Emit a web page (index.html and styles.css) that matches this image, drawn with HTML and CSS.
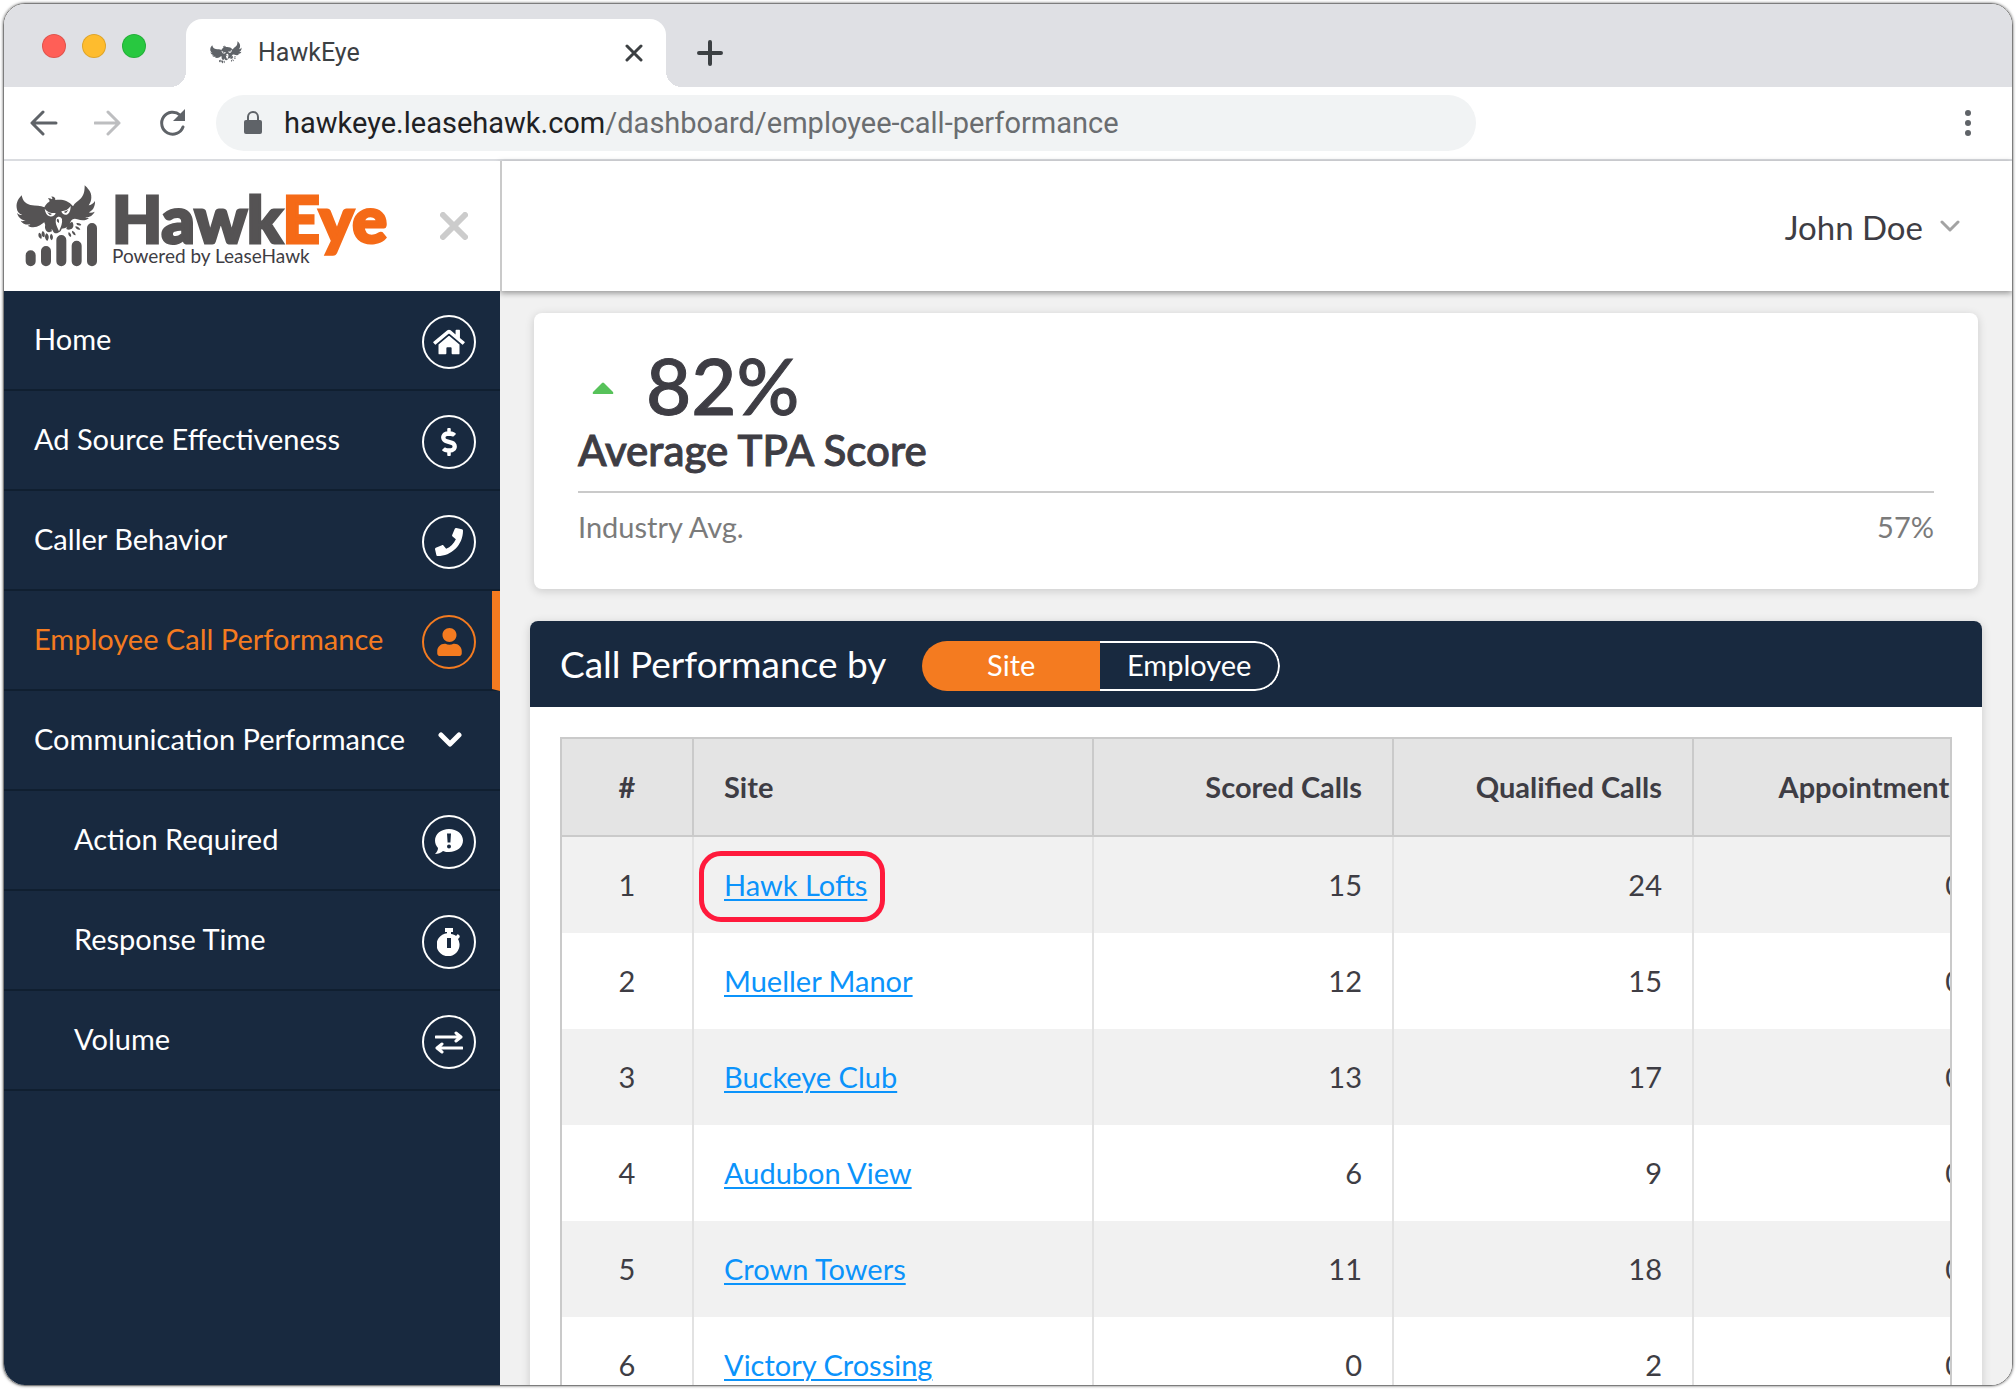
FILE: index.html
```html
<!DOCTYPE html>
<html lang="en">
<head>
<meta charset="utf-8">
<meta name="viewport" content="width=device-width, initial-scale=1">
<title>HawkEye</title>
<link rel="stylesheet" href="styles.css">
</head>
<body>
<svg class="defs" aria-hidden="true">
  <symbol id="hawk" viewBox="0 0 240 180">
    <path d="M17 31C8 40 0 52 2 68C3 80 10 86 19 90C11 90 6 87 3 83C6 96 15 105 29 106C23 109 18 109 14 107C20 116 31 121 43 118C41 121 38 122 35 122C48 130 61 127 72 121C78 117 82 113 85 112C88 125 97 132 109 134C112 143 119 148 126 143C132 141 136 136 137 131C148 131 160 124 163 112C168 101 176 100 184 103C198 108 211 107 219 99C215 99 211 99 208 97C220 98 231 91 236 80C230 83 223 84 218 82C229 78 238 66 237 48C232 56 225 60 218 61C228 48 229 28 219 15C215 10 210 4 206 1C206 16 205 29 195 40C185 50 176 54 171 64C158 46 137 42 118 45C119 39 113 34 106 35C109 38 110 40 108 43C103 40 98 39 96 41C101 44 101 47 100 50C93 54 88 60 85 67C74 62 60 62 43 60C27 56 20 46 17 31Z"/>
    <path class="cut" d="M86 71C94 82 107 85 119 84C117 92 109 96 101 94C93 92 88 84 86 71ZM164 63C157 74 147 78 136 79C138 87 145 91 152 89C160 86 164 76 164 63ZM120 101C125 92 136 94 138 103C140 114 135 126 129 139C126 128 116 117 120 101Z"/>
    <path d="M93 82l15 5-6 4zM157 75l-14 6 7 3zM123 103c5-4 7 3 6 11-5-2-8-6-6-11z"/>
    <path d="M89 118C98 120 106 127 108 139C99 144 90 141 88 132C86 127 87 122 89 118ZM80 138c7 3 8 12 5 19-8-1-11-12-5-19zM69 143c8 2 10 12 7 18-8-2-11-11-7-18zM91 145c8 3 10 15 3 23-8-5-9-16-3-23zM105 146c7 4 8 14 2 20-6-5-7-14-2-20zM168 110C158 115 152 122 151 132C160 137 171 132 172 124C173 118 171 113 168 110ZM181 115c6-2 12 0 15 5-6 4-14 1-15-5zM178 124c7 0 13 4 15 10-7 2-15-3-15-10zM168 137c7 2 11 8 11 14-7-1-12-7-11-14zM158 141c6 3 9 9 7 15-7-2-10-8-7-15z"/>
  </symbol>
</svg>

<div class="window">
  <div class="tabstrip">
    <div class="lights"><span class="light red"></span><span class="light amber"></span><span class="light green"></span></div>
    <div class="tab">
      <svg class="favicon" aria-hidden="true"><use href="#hawk"/></svg>
      <span class="tab-title">HawkEye</span>
      <button class="icon-btn" aria-label="Close tab"><svg width="18" height="18" viewBox="0 0 18 18"><path class="stroke w3" d="M2 2l14 14M16 2L2 16"/></svg></button>
    </div>
    <button class="icon-btn new-tab" aria-label="New tab"><svg width="26" height="26" viewBox="0 0 26 26"><path class="stroke w4" d="M13 2v22M2 13h22"/></svg></button>
  </div>

  <div class="toolbar">
    <button class="icon-btn" aria-label="Back"><svg width="28" height="28" viewBox="0 0 28 28"><path class="stroke w3" d="M26 14H3M13 3L2 14l11 11"/></svg></button>
    <button class="icon-btn faded" aria-label="Forward"><svg width="28" height="28" viewBox="0 0 28 28"><path class="stroke w3" d="M1 14h24M14 3l11 11-11 11"/></svg></button>
    <button class="icon-btn" aria-label="Reload"><svg width="28" height="28" viewBox="0 0 28 28"><path class="stroke w3" d="M22 6A11 11 0 1 0 25 18"/><path d="M27 0v12H15z"/></svg></button>
    <div class="address">
      <svg width="18" height="24" viewBox="0 0 18 24" aria-hidden="true"><path d="M2 9h14a2 2 0 0 1 2 2v10a2 2 0 0 1-2 2H2a2 2 0 0 1-2-2V11a2 2 0 0 1 2-2z"/><path class="stroke w2" d="M4 10V6a5 5 0 0 1 10 0v4"/></svg>
      <span class="url"><b>hawkeye.leasehawk.com</b>/dashboard/employee-call-performance</span>
    </div>
    <button class="icon-btn menu" aria-label="Menu"><svg width="8" height="28" viewBox="0 0 8 28"><circle cx="4" cy="4" r="3"/><circle cx="4" cy="14" r="3"/><circle cx="4" cy="24" r="3"/></svg></button>
  </div>

  <div class="app">
    <aside class="sidebar">
      <div class="brand">
        <svg class="logo" viewBox="0 0 246 246" aria-hidden="true">
          <use href="#hawk" width="240" height="180"/>
          <path class="bars" d="M44 211v18M90 198v31M136 165v64M182 182v47M228 129v100"/>
        </svg>
        <div class="wordmark">
          <div class="name">Hawk<span>Eye</span></div>
          <div class="tagline">Powered by LeaseHawk</div>
        </div>
        <button class="icon-btn collapse" aria-label="Close menu"><svg width="28" height="28" viewBox="0 0 28 28"><path class="stroke w6" d="M3 3l22 22M25 3L3 25"/></svg></button>
      </div>
      <nav>
        <a class="item" href="#home">Home <span class="badge"><svg width="32" height="28" viewBox="0 0 576 512"><path d="M280.370 148.260L96 300.110V464a16 16 0 0 0 16 16l112.060-.290a16 16 0 0 0 15.920-16V368a16 16 0 0 1 16-16h64a16 16 0 0 1 16 16v95.640a16 16 0 0 0 16 16.050L464 480a16 16 0 0 0 16-16V300L295.670 148.260a12.190 12.190 0 0 0-15.300 0zM571.600 251.470L488 182.560V44.050a12 12 0 0 0-12-12h-56a12 12 0 0 0-12 12v72.610L318.470 43a48 48 0 0 0-61 0L4.340 251.470a12 12 0 0 0-1.600 16.900l25.500 31A12 12 0 0 0 45.150 301l235.220-193.740a12.190 12.190 0 0 1 15.300 0L530.900 301a12 12 0 0 0 16.900-1.600l25.500-31a12 12 0 0 0-1.700-16.930z"/></svg></span></a>
        <a class="item" href="#ads">Ad Source Effectiveness <span class="badge"><svg width="16" height="28" viewBox="0 0 288 512"><path d="M209.200 233.400l-108-31.600C88.700 198.200 80 186.500 80 173.500c0-16.300 13.200-29.500 29.500-29.500h66.300c12.200 0 24.200 3.700 34.200 10.500 6.100 4.100 14.300 3.100 19.500-2l34.800-34c7.100-6.900 6.100-18.400-1.800-24.500C238 74.800 207.400 64.100 176 64V16c0-8.800-7.200-16-16-16h-32c-8.800 0-16 7.200-16 16v48h-2.500C45.800 64-5.400 118.700.5 183.600c4.200 46.100 39.400 83.600 83.800 96.600l102.500 30c12.500 3.700 21.200 15.300 21.200 28.300 0 16.300-13.200 29.500-29.500 29.500h-66.300C100 368 88 364.300 78 357.500c-6.100-4.100-14.300-3.100-19.500 2l-34.800 34c-7.100 6.900-6.100 18.400 1.800 24.500 24.500 19.200 55.100 29.900 86.500 30v48c0 8.800 7.200 16 16 16h32c8.800 0 16-7.200 16-16v-48.200c46.600-.9 90.300-28.600 105.700-72.700 21.500-61.600-14.600-124.800-72.500-141.700z"/></svg></span></a>
        <a class="item" href="#callers">Caller Behavior <span class="badge"><svg width="28" height="28" viewBox="0 0 512 512"><path d="M493.400 24.600l-104-24c-11.300-2.600-22.900 3.300-27.500 13.900l-48 112c-4.200 9.800-1.400 21.300 6.900 28l60.600 49.600c-36 76.700-98.900 140.500-177.200 177.200l-49.600-60.600c-6.800-8.300-18.200-11.100-28-6.900l-112 48C3.900 366.500-2 378.100.6 389.400l24 104C27.100 504.200 36.700 512 48 512c256.100 0 464-207.500 464-464 0-11.200-7.700-20.900-18.600-23.400z"/></svg></span></a>
        <a class="item active" href="#employees" aria-current="page">Employee Call Performance <span class="badge"><svg width="25" height="28" viewBox="0 0 448 512"><path d="M224 256c70.700 0 128-57.300 128-128S294.700 0 224 0 96 57.300 96 128s57.300 128 128 128zm89.600 32h-16.700c-22.200 10.200-46.900 16-72.900 16s-50.600-5.800-72.900-16h-16.700C60.200 288 0 348.200 0 422.400V464c0 26.500 21.500 48 48 48h352c26.500 0 48-21.500 48-48v-41.600c0-74.200-60.200-134.400-134.400-134.400z"/></svg></span></a>
        <a class="item group" href="#communication">Communication Performance <svg width="24" height="16" viewBox="0 0 24 16"><path class="stroke w5" d="M3 4l9 9 9-9"/></svg></a>
        <a class="item sub" href="#action">Action Required <span class="badge"><svg width="28" height="26" viewBox="0 0 28 26"><path fill-rule="evenodd" d="M14 0c8 0 14 5 14 11.500S22 23 14 23c-2 0-4 0-6-1-2 2-5 3-8 3 2-2 3-4 3-6C1 17 0 14 0 11.500 0 5 6 0 14 0zM12 4.500l.6 9h2.800l.6-9zM14 15.500a2 2 0 1 0 0 4 2 2 0 0 0 0-4z"/></svg></span></a>
        <a class="item sub" href="#response">Response Time <span class="badge"><svg width="24" height="28" viewBox="0 0 24 28"><path fill-rule="evenodd" d="M8 0h8v4h-2v2c2 0 4 1 5 2l1-1c0-1 1-1 2 0s1 2 0 3l-1 1A11.500 11.500 0 1 1 10 5.300V4H8zM10 10v10h4V10z"/></svg></span></a>
        <a class="item sub" href="#volume">Volume <span class="badge"><svg width="28" height="24" viewBox="0 0 28 24"><path class="stroke w3" d="M1 7h24M21 3l5 4-5 4M27 18H3M7 14l-5 4 5 4"/></svg></span></a>
      </nav>
    </aside>

    <div class="content">
      <header class="topbar">
        <button class="user">John Doe <svg width="20" height="14" viewBox="0 0 20 14"><path class="stroke w3" d="M2 2l8 8 8-8"/></svg></button>
      </header>
      <main>
        <section class="score-card">
          <div class="score"><svg width="22" height="12" viewBox="0 0 22 12" aria-hidden="true"><path d="M10 1q1-1 2 0l9 9q1 2-1 2H2q-2 0-1-2z"/></svg><span>82%</span></div>
          <h1>Average TPA Score</h1>
          <div class="industry"><span>Industry Avg.</span><span>57%</span></div>
        </section>

        <section class="panel">
          <div class="panel-head">
            <h2>Call Performance by</h2>
            <div class="toggle"><button class="on" aria-pressed="true">Site</button><button aria-pressed="false">Employee</button></div>
          </div>
          <div class="table-wrap">
            <table>
              <colgroup><col class="c-num"><col class="c-site"><col class="c-val"><col class="c-val"><col class="c-val"></colgroup>
              <thead><tr><th>#</th><th>Site</th><th>Scored Calls</th><th>Qualified Calls</th><th>Appointments</th></tr></thead>
              <tbody>
                <tr><td>1</td><td><a class="marked" href="#s1">Hawk Lofts</a></td><td>15</td><td>24</td><td>0</td></tr>
                <tr><td>2</td><td><a href="#s2">Mueller Manor</a></td><td>12</td><td>15</td><td>0</td></tr>
                <tr><td>3</td><td><a href="#s3">Buckeye Club</a></td><td>13</td><td>17</td><td>0</td></tr>
                <tr><td>4</td><td><a href="#s4">Audubon View</a></td><td>6</td><td>9</td><td>0</td></tr>
                <tr><td>5</td><td><a href="#s5">Crown Towers</a></td><td>11</td><td>18</td><td>0</td></tr>
                <tr><td>6</td><td><a href="#s6">Victory Crossing</a></td><td>0</td><td>2</td><td>0</td></tr>
              </tbody>
            </table>
          </div>
        </section>
      </main>
    </div>
  </div>
</div>
</body>
</html>
```
FILE: styles.css
```css
:root {
  --navy: #18293f;
  --orange: #f47b20;
  --ink: #3e3d44;
  --rule: #cacaca;
  --pale: #f1f1f1;
}
* { box-sizing: border-box; }
body {
  margin: 0;
  padding: 3px;
  height: 100vh;
  overflow: hidden;
  background: #fff;
  color: var(--ink);
  font: 29px/36px "Lato", sans-serif;
}
button {
  border: 0;
  padding: 0;
  background: none;
  color: inherit;
  font: inherit;
}
svg { display: block; fill: currentColor; flex: none; }
.defs { width: 0; height: 0; position: absolute; }
.cut { fill: #fff; }
.stroke {
  fill: none;
  stroke: currentColor;
  stroke-linecap: round;
  stroke-linejoin: round;
}
.w2 { stroke-width: 2; }
.w3 { stroke-width: 3; }
.w4 { stroke-width: 4; }
.w5 { stroke-width: 5; }
.w6 { stroke-width: 6; }
.icon-btn { display: flex; color: #5f6368; }
.icon-btn.faded { color: #bdbec0; }

/* Browser window */
.window {
  height: 100%;
  display: flex;
  flex-direction: column;
  overflow: hidden;
  border: 1px solid #7d7d7d;
  border-radius: 22px;
  box-shadow: 0 0 3px rgba(0, 0, 0, .6);
}
.tabstrip {
  display: flex;
  align-items: flex-end;
  flex: none;
  padding-top: 15px;
  background: #dfe0e4;
}
.lights { display: flex; gap: 16px; padding: 0 40px 29px 38px; }
.light {
  width: 24px;
  height: 24px;
  border: 1px solid rgba(0, 0, 0, .12);
  border-radius: 50%;
}
.red { background: #ff5f57; }
.amber { background: #febc2e; }
.green { background: #28c840; }
.tab {
  position: relative;
  display: flex;
  align-items: center;
  width: 480px;
  height: 68px;
  padding: 0 23px 0 24px;
  border-radius: 16px 16px 0 0;
  background: #fff;
}
.tab::before, .tab::after {
  content: "";
  position: absolute;
  bottom: 0;
  width: 16px;
  height: 16px;
}
.tab::before { right: 100%; background: radial-gradient(circle at 0 0, transparent 16px, #fff 16px); }
.tab::after { left: 100%; background: radial-gradient(circle at 100% 0, transparent 16px, #fff 16px); }
.favicon { width: 32px; height: 24px; margin-right: 16px; color: #5f6368; }
.tab-title { flex: 1; font: 25px/30px "Roboto", sans-serif; color: #3c4043; }
.tab .icon-btn, .new-tab { color: #3c4043; }
.new-tab { padding: 0 31px 21px; }
.toolbar {
  display: flex;
  align-items: center;
  flex: none;
  gap: 36px;
  height: 74px;
  padding: 0 40px 0 26px;
  border-bottom: 2px solid #dadce0;
  background: #fff;
}
.address {
  display: flex;
  align-items: center;
  flex: 0 1 1260px;
  gap: 22px;
  height: 56px;
  margin-left: -6px;
  padding: 0 28px;
  border-radius: 28px;
  background: #f1f3f4;
  color: #5f6368;
}
.url {
  overflow: hidden;
  white-space: nowrap;
  font: 29px/36px "Roboto", sans-serif;
  color: #6a6d70;
}
.url b { font-weight: 400; color: #202124; }
.menu { margin-left: auto; }

/* Application */
.app { display: flex; flex: 1; min-height: 0; background: var(--pale); }
.sidebar {
  position: relative;
  z-index: 1;
  flex: none;
  width: 496px;
  background: var(--navy);
}
.brand {
  display: flex;
  align-items: flex-start;
  height: 130px;
  padding: 24px 32px 0 12px;
  background: #fff;
}
.logo { width: 82px; height: 82px; color: #555354; }
.bars { fill: none; stroke: currentColor; stroke-width: 30; stroke-linecap: round; }
.wordmark { flex: 1; padding-left: 14px; }
.name {
  font-size: 65px;
  line-height: 66px;
  font-weight: 900;
  color: #555354;
  -webkit-text-stroke: 3px currentColor;
}
.name span { color: #f56a17; }
.tagline { margin-top: -7px; font-size: 19px; line-height: 24px; }
.collapse { margin-top: 27px; color: #ccc; }
.item {
  display: flex;
  align-items: center;
  justify-content: space-between;
  height: 100px;
  padding: 0 24px 2px 30px;
  border-bottom: 2px solid #101f30;
  color: #fff;
  text-decoration: none;
  white-space: nowrap;
}
.item.active {
  padding-right: 16px;
  border-right: 8px solid var(--orange);
  color: var(--orange);
}
.item.group { padding-right: 38px; }
.item.sub { padding-left: 70px; }
.badge {
  display: flex;
  align-items: center;
  justify-content: center;
  width: 54px;
  height: 54px;
  margin-top: 6px;
  border: 2px solid currentColor;
  border-radius: 50%;
}
.content { display: flex; flex: 1; flex-direction: column; min-width: 0; }
.topbar {
  display: flex;
  align-items: center;
  justify-content: flex-end;
  position: relative;
  flex: none;
  height: 130px;
  padding-right: 52px;
  border-left: 2px solid var(--rule);
  background: #fff;
  box-shadow: 0 2px 6px rgba(0, 0, 0, .4);
}
.user { display: flex; align-items: center; gap: 17px; font-size: 33px; line-height: 40px; padding-top: 2px; }
.user svg { color: #a3a3a3; }
main { flex: 1; min-height: 0; padding: 22px 30px 0; overflow: hidden; }
.score-card {
  margin: 0 4px 32px;
  padding: 36px 44px 32px;
  border-radius: 8px;
  background: #fff;
  box-shadow: 0 2px 10px rgba(0, 0, 0, .16);
}
.score {
  display: flex;
  align-items: center;
  gap: 32px;
  padding-left: 14px;
  font-size: 78px;
  line-height: 72px;
  font-weight: 500;
  -webkit-text-stroke: 1px currentColor;
}
.score svg { margin-top: 6px; color: #57c25a; }
h1 {
  margin: 0;
  padding: 4px 0 16px;
  border-bottom: 2px solid var(--rule);
  font-size: 42px;
  line-height: 50px;
  font-weight: 500;
  -webkit-text-stroke: 1px currentColor;
}
.industry { display: flex; justify-content: space-between; padding: 16px 0 12px; color: #7b7b7b; }
.panel {
  border-radius: 8px;
  background: #fff;
  box-shadow: 0 2px 10px rgba(0, 0, 0, .16);
}
.panel-head {
  display: flex;
  align-items: center;
  gap: 36px;
  height: 86px;
  padding: 4px 30px 0;
  border-radius: 8px 8px 0 0;
  background: var(--navy);
  color: #fff;
}
h2 { margin: 0; padding-bottom: 4px; font-size: 37px; line-height: 44px; font-weight: 400; }
.toggle {
  display: flex;
  width: 358px;
  height: 50px;
  border-radius: 25px;
  overflow: hidden;
}
.toggle button { flex: 1; padding-bottom: 2px; border: 2px solid #fff; border-left: 0; border-radius: 0 25px 25px 0; }
.toggle .on { border: 0; border-radius: 0; background: var(--orange); }
.table-wrap {
  margin: 30px 30px 0;
  border: 2px solid var(--rule);
  border-bottom: 0;
  overflow: hidden;
}
table { width: 1432px; table-layout: fixed; border-collapse: separate; border-spacing: 0; }
.c-num { width: 132px; }
.c-site { width: 400px; }
.c-val { width: 300px; }
th, td {
  height: 96px;
  padding: 0 30px;
  border-right: 2px solid #e2e2e2;
  text-align: right;
  white-space: nowrap;
}
th { height: 98px; background: #e4e4e4; border-right-color: var(--rule); border-bottom: 2px solid var(--rule); font-weight: 700; }
th:nth-child(1), td:nth-child(1) { text-align: center; }
th:nth-child(2), td:nth-child(2) { text-align: left; }
tbody tr:nth-child(odd) { background: var(--pale); }
td a { position: relative; color: #0b93fb; text-decoration-thickness: 2px; text-underline-offset: 3px; }
.marked::after {
  content: "";
  position: absolute;
  inset: -16px -18px -20px -25px;
  border: 5px solid #ff1a3c;
  border-radius: 22px;
}
```
